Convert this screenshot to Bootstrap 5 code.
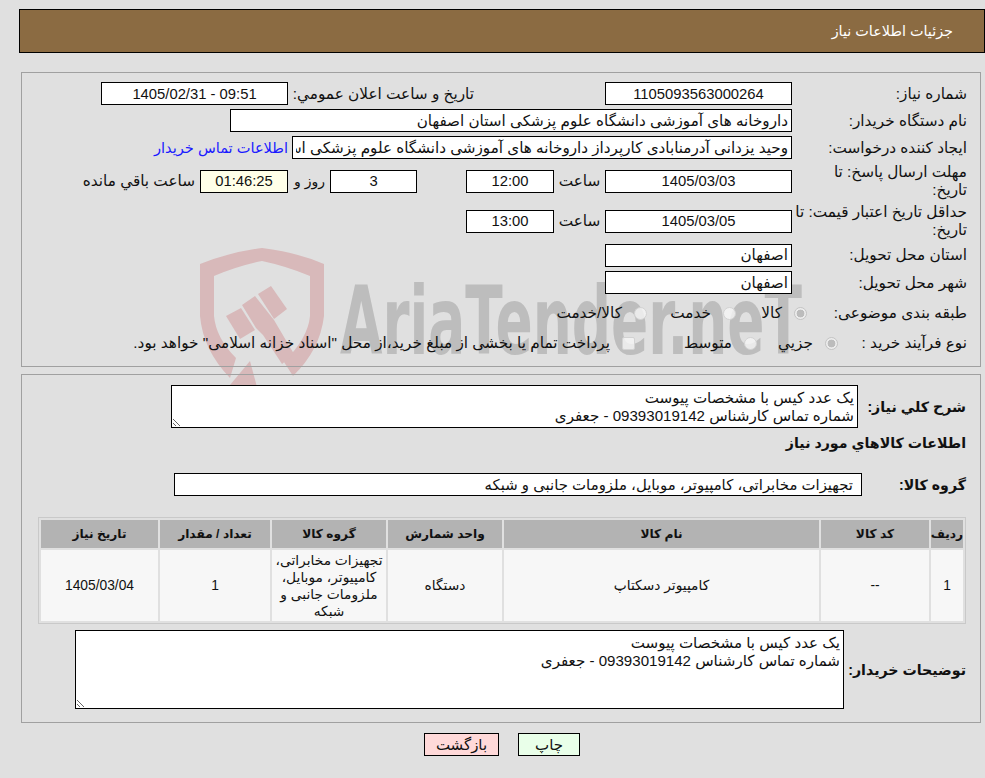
<!DOCTYPE html>
<html lang="fa" dir="rtl">
<head>
<meta charset="utf-8">
<title>جزئیات اطلاعات نیاز</title>
<link rel="stylesheet" href="https://cdn.jsdelivr.net/npm/bootstrap@5.3.0/dist/css/bootstrap.min.css">
<style>
html,body{background:#e0e0e0;}
body{margin:0;position:relative;height:778px;overflow:hidden;font-family:"Liberation Sans","DejaVu Sans",sans-serif;font-size:15.3px;line-height:18px;color:#111;}
.wm{position:absolute;top:0;left:0;z-index:0;}
.wm-text{font-family:"DejaVu Sans",sans-serif;font-weight:700;font-size:94px;fill:#bdbdbd;}
.sheet{position:relative;z-index:1;}
.topbar{margin:9px 0 19px 19px;height:44px;background:#8b6b42;border:1px solid #000;color:#fff;font-size:14.4px;padding-right:31px;}
.pane{margin:0 4px 7px 21px;border:1px solid #a0a0a0;}
.pane-a{padding:7px 13px 10px 0;height:295px;}
.pane-b{padding:10px 14px 0 0;height:349px;margin-bottom:10px;}
.ln{display:flex;align-items:center;}
.h27{height:27px}.h28{height:28px}.h40{height:40px}.h34{height:34px}.h26{height:26px}
.lab{width:175px;flex:none;white-space:nowrap;}
.lab-r{width:160px;flex:none;}
.lab-n{width:129px;flex:none;}
.fld{height:23px;border:1px solid #000;border-radius:0;background:#fff;color:#111;padding:0 3px;font:14.8px/20px "Liberation Sans","DejaVu Sans",sans-serif;outline:0;flex:none;}
.fld-ar{font-size:15.2px;}
.fld-grp{width:688px;font-size:14.9px;padding-right:8px;}
.num{text-align:center;}
.w187{width:187px}.w88{width:88px}.w87{width:87px}.w562{width:562px}.w500{width:500px}
.cream{background:#ffffe8;}
.off131{margin-right:131px;}
.cap186{width:186px;flex:none;}
.cap51{width:51px;flex:none;text-align:center;}
.cap42{width:42px;flex:none;padding-right:5px;font-size:14px;}
.sp49{width:49px;flex:none;}
.ml5{margin-right:5px;}
.ml4{margin-right:4px;}
.buyer{color:#1a1aff;text-decoration:none;font-size:14.6px;}
.rd{appearance:none;-webkit-appearance:none;width:13px;height:13px;margin:0;flex:none;border-radius:50%;border:1px solid #d2d2d2;background:rgba(245,245,245,.8);}
.rd:checked{background:radial-gradient(circle,#bcbcbc 0 3.6px,#ececec 4.2px);border-color:#c4c4c4;}
.cb{appearance:none;-webkit-appearance:none;width:13px;height:13px;margin:0;flex:none;border-radius:2px;border:1px solid #d2d2d2;background:rgba(245,245,245,.8);}
.opt{display:flex;align-items:center;flex:none;}
.opt span{margin-right:12px;}
.c71{width:71px}.c89{width:89px}.c81{width:81px}.c122{width:122px}
.strong{font-weight:700;font-size:14.2px;}
.lb109{width:108px;flex:none;}
.lb105{width:104px;flex:none;}
.lb123{width:122px;flex:none;}
.ta{display:block;border:1px solid #000;border-radius:0;background:#fff;color:#111;padding:3px 3px 0;font:15.1px/18px "Liberation Sans","DejaVu Sans",sans-serif;outline:0;resize:both;flex:none;}
.ta1{width:687px;height:43px;}
.ta2{width:769px;height:79px;}
.head2{height:30px;margin-top:0;}
.grp{margin-top:15px;}
.grid-box{width:928px;margin:21px 0 6px 0;table-layout:fixed;border-collapse:separate;border-spacing:2px;border:1px solid #c9c9c9;--bs-table-bg:transparent;}
.grid-box th,.grid-box td{border:0;padding:0 2px;text-align:center;vertical-align:middle;color:#111;box-shadow:none;}
.grid-box th{height:28px;background:#b3b3b3;font-size:12.2px;font-weight:700;}
.grid-box th:first-child{padding:0;}
.grid-box td{height:71px;background:#f7f7f7;font-size:13.8px;line-height:17px;}
.acts{margin:0 4px 0 23px;gap:19px;}
.act{height:23px;padding:0;border:1px solid #000;border-radius:0;color:#111;font:15px/20px "Liberation Sans","DejaVu Sans",sans-serif;}
.act-print{width:62px;background:#e9ffe9;}
.act-back{width:75px;background:#ffd9d9;}
.act:hover{color:#111;}
.act-print:hover{background:#e9ffe9;border-color:#000;}
.act-back:hover{background:#ffd9d9;border-color:#000;}
</style>
</head>
<body>
<svg class="wm" width="985" height="400" viewBox="0 0 985 400" aria-hidden="true">
  <g fill="#d8b9ba">
    <path fill-rule="evenodd" d="M200 264Q230 252 262 248Q296 252 324 264V316Q320 350 293 376L284 362Q308 338 310 316V276Q286 266 262 261Q238 266 214 276V316Q216 338 236 358L230 378Q203 350 200 316Z"/>
    <path d="M226 316L241 308L255 330L240 339Z"/>
    <path d="M242 305L255 296L274 320L294 354L282 364L263 335L256 328Z"/>
    <path d="M258 294L271 286L287 309L274 319Z"/>
    <path d="M250 361L257 387L230 385Z"/>
  </g>
  <text class="wm-text" x="340" y="354" textLength="462" lengthAdjust="spacingAndGlyphs" direction="ltr" unicode-bidi="bidi-override">AriaTender.neT</text>
</svg>

<div class="sheet">
  <div class="topbar d-flex align-items-center">جزئیات اطلاعات نیاز</div>

  <div class="pane pane-a">
    <div class="ln h27">
      <div class="lab">شماره نیاز:</div>
      <input class="fld num w187" readonly value="1105093563000264">
      <div class="off131 cap186">تاریخ و ساعت اعلان عمومي:</div>
      <input class="fld num w187" dir="ltr" readonly value="1405/02/31 - 09:51">
    </div>
    <div class="ln h27">
      <div class="lab">نام دستگاه خریدار:</div>
      <input class="fld fld-ar w562" readonly value="داروخانه های آموزشی دانشگاه علوم پزشکی استان اصفهان">
    </div>
    <div class="ln h27">
      <div class="lab">ایجاد کننده درخواست:</div>
      <input class="fld fld-ar w500" readonly value="وحید یزدانی آدرمنابادی کارپرداز داروخانه های آموزشی دانشگاه علوم پزشکی استان اصفهان">
      <a class="buyer ml4" href="#">اطلاعات تماس خریدار</a>
    </div>
    <div class="ln h40">
      <div class="lab">مهلت ارسال پاسخ: تا<br>تاریخ:</div>
      <input class="fld num w187" readonly value="1405/03/03">
      <div class="cap51">ساعت</div>
      <input class="fld num w88" readonly value="12:00">
      <div class="sp49"></div>
      <input class="fld num w87" readonly value="3">
      <div class="cap42">روز و</div>
      <input class="fld num w88 cream" readonly value="01:46:25">
      <div class="ml5">ساعت باقي مانده</div>
    </div>
    <div class="ln h40">
      <div class="lab">حداقل تاریخ اعتبار قیمت: تا<br>تاریخ:</div>
      <input class="fld num w187" readonly value="1405/03/05">
      <div class="cap51">ساعت</div>
      <input class="fld num w88" readonly value="13:00">
    </div>
    <div class="ln h28">
      <div class="lab">استان محل تحویل:</div>
      <input class="fld fld-ar w187" readonly value="اصفهان">
    </div>
    <div class="ln h27">
      <div class="lab">شهر محل تحویل:</div>
      <input class="fld fld-ar w187" readonly value="اصفهان">
    </div>
    <div class="ln h34">
      <div class="lab-r">طبقه بندی موضوعی:</div>
      <label class="opt c71"><input class="rd" type="radio" name="cat" checked disabled><span>کالا</span></label>
      <label class="opt c89"><input class="rd" type="radio" name="cat" disabled><span>خدمت</span></label>
      <label class="opt"><input class="rd" type="radio" name="cat" disabled><span>کالا/خدمت</span></label>
    </div>
    <div class="ln h26">
      <div class="lab-n">نوع فرآیند خرید :</div>
      <label class="opt c81"><input class="rd" type="radio" name="proc" checked disabled><span>جزيي</span></label>
      <label class="opt c122"><input class="rd" type="radio" name="proc" disabled><span>متوسط</span></label>
      <label class="opt"><input class="cb" type="checkbox" disabled><span>پرداخت تمام یا بخشی از مبلغ خرید،از محل "اسناد خزانه اسلامی" خواهد بود.</span></label>
    </div>
  </div>

  <div class="pane pane-b">
    <div class="ln">
      <div class="lb109 strong">شرح کلي نياز:</div>
      <textarea class="ta ta1" readonly>یک عدد کیس با مشخصات پیوست
شماره تماس کارشناس 09393019142 - جعفری</textarea>
    </div>
    <div class="ln head2 strong">اطلاعات کالاهاي مورد نياز</div>
    <div class="ln grp">
      <div class="lb105 strong">گروه کالا:</div>
      <input class="fld fld-grp" readonly value="تجهیزات مخابراتی، کامپیوتر، موبایل، ملزومات جانبی و شبکه">
    </div>
    <table class="table grid-box">
      <colgroup><col style="width:32px"><col style="width:108px"><col style="width:315px"><col style="width:114px"><col style="width:114px"><col style="width:110px"><col style="width:117px"></colgroup>
      <thead>
        <tr><th>ردیف</th><th>کد کالا</th><th>نام کالا</th><th>واحد شمارش</th><th>گروه کالا</th><th>تعداد / مقدار</th><th>تاریخ نیاز</th></tr>
      </thead>
      <tbody>
        <tr><td>1</td><td>--</td><td>کامپیوتر دسکتاپ</td><td>دستگاه</td><td>تجهیزات مخابراتی، کامپیوتر، موبایل، ملزومات جانبی و شبکه</td><td>1</td><td>1405/03/04</td></tr>
      </tbody>
    </table>
    <div class="ln">
      <div class="lb123 strong">توضیحات خریدار:</div>
      <textarea class="ta ta2" readonly>یک عدد کیس با مشخصات پیوست
شماره تماس کارشناس 09393019142 - جعفری</textarea>
    </div>
  </div>

  <div class="acts d-flex justify-content-center">
    <button type="button" class="btn act act-print">چاپ</button>
    <button type="button" class="btn act act-back">بازگشت</button>
  </div>
</div>
<script src="https://cdn.jsdelivr.net/npm/bootstrap@5.3.0/dist/js/bootstrap.bundle.min.js"></script>
</body>
</html>
